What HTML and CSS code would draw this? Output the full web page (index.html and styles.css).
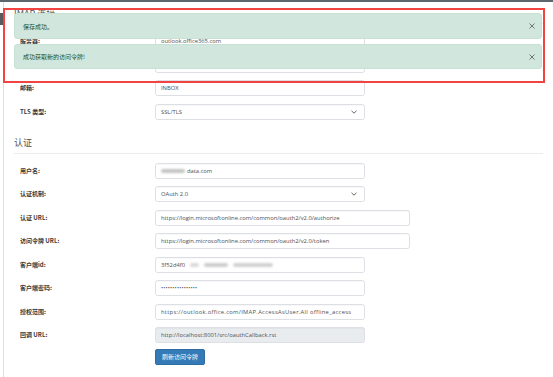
FILE: index.html
```html
<!DOCTYPE html>
<html lang="zh-CN">
<head>
<meta charset="utf-8">
<title>IMAP 设置</title>
<link rel="stylesheet" href="styles.css">
</head>
<body>
<div class="topbar"></div>
<div class="side-tab"></div>
<main class="page">
  <section class="section">
    <h2 class="section-title">IMAP 连接</h2>
    <div class="form">
      <label class="label">服务器:</label>
      <div class="input short">outlook.office365.com</div>
      <label class="label">端口:</label>
      <div class="input short">993</div>
      <label class="label">邮箱:</label>
      <div class="input short">INBOX</div>
      <label class="label">TLS 类型:</label>
      <div class="input short select">SSL/TLS<svg class="chev" viewBox="0 0 6 4" width="6" height="4"><polyline points="0.5,0.8 3,3.2 5.5,0.8" fill="none" stroke="#555" stroke-width="0.9"/></svg></div>
    </div>
  </section>

  <section class="section second">
    <h2 class="section-title">认证</h2>
    <div class="form">
      <label class="label">用户名:</label>
      <div class="input short"><span class="blur b1"></span>data.com</div>
      <label class="label">认证机制:</label>
      <div class="input short select">OAuth 2.0<svg class="chev" viewBox="0 0 6 4" width="6" height="4"><polyline points="0.5,0.8 3,3.2 5.5,0.8" fill="none" stroke="#555" stroke-width="0.9"/></svg></div>
      <label class="label">认证 URL:</label>
      <div class="input long">https://login.microsoftonline.com/common/oauth2/v2.0/authorize</div>
      <label class="label">访问令牌 URL:</label>
      <div class="input long">https://login.microsoftonline.com/common/oauth2/v2.0/token</div>
      <label class="label">客户端id:</label>
      <div class="input short">3f52d4f0<span class="blur b2"></span><span class="blur b3"></span><span class="blur b4"></span></div>
      <label class="label">客户端密码:</label>
      <div class="input short dots">••••••••••••••••</div>
      <label class="label">授权范围:</label>
      <div class="input short scope">https://outlook.office.com/IMAP.AccessAsUser.All offline_access</div>
      <label class="label">回调 URL:</label>
      <div class="input short readonly">http://localhost:8001/src/oauthCallback.rst</div>
      <span></span>
      <div class="actions"><button class="btn">刷新访问令牌</button></div>
    </div>
  </section>
</main>

<div class="toasts">
  <div class="toast t1"><span>保存成功。</span><svg class="close" viewBox="0 0 6 6" width="6" height="6"><path d="M0.5 0.5L5.5 5.5M5.5 0.5L0.5 5.5" stroke="#6b7a72" stroke-width="1"/></svg></div>
  <div class="toast t2"><span>成功获取新的访问令牌!</span><svg class="close" viewBox="0 0 6 6" width="6" height="6"><path d="M0.5 0.5L5.5 5.5M5.5 0.5L0.5 5.5" stroke="#6b7a72" stroke-width="1"/></svg></div>
</div>
<div class="annotation"></div>
</body>
</html>
```

FILE: styles.css
```css
* { box-sizing: border-box; }

html, body {
  margin: 0;
  padding: 0;
  background: #fff;
  width: 553px;
  height: 377px;
  overflow: hidden;
}

body {
  font-family: "Open Sans", "Noto Sans CJK SC", sans-serif;
  color: #333;
  position: relative;
}

.topbar {
  height: 2px;
  background: #5c666c;
}

.side-tab {
  position: absolute;
  left: 0;
  top: 13px;
  width: 3px;
  height: 12px;
  background: #5a5a5a;
}

.page {
  margin-left: 3px;
  border-left: 1px solid #dedede;
  padding: 5.5px 10px 20px 10px;
  min-height: 375px;
}

.section-title {
  margin: 0 0 9px 0;
  padding-bottom: 3.5px;
  border-bottom: 1px solid #ececec;
  font-size: 9px;
  line-height: 12px;
  font-weight: 400;
  color: #555;
  font-family: "Noto Sans CJK SC", "Open Sans", sans-serif;
}

.second {
  margin-top: 17px;
}

.second .section-title {
  padding-bottom: 4px;
}

.form {
  display: grid;
  grid-template-columns: 141px auto;
  row-gap: 7.5px;
  align-items: center;
}

.label {
  padding-left: 6px;
  font-size: 6px;
  line-height: 10px;
  font-weight: 700;
  color: #3a3a3a;
  font-family: "Noto Sans CJK SC", "Open Sans", sans-serif;
}

.input {
  height: 16px;
  border: 1px solid #dcdfe3;
  border-radius: 2.5px;
  box-shadow: inset 0 1px 1px rgba(0, 0, 0, 0.03);
  padding: 0 5px;
  font-size: 5.8px;
  line-height: 14px;
  color: #4a4f55;
  background: #fff;
  display: flex;
  align-items: center;
  white-space: nowrap;
  overflow: hidden;
}

.short { width: 210px; }
.long { width: 255px; }

.scope { letter-spacing: 0.3px; }

.select {
  justify-content: space-between;
  padding-right: 7px;
}

.chev { display: block; }

.readonly {
  background: #e9ecef;
}

.dots {
  font-size: 5.5px;
  letter-spacing: 0.2px;
  color: #555;
}

.blur {
  display: inline-block;
  height: 4px;
  border-radius: 2px;
  background: #c4c4c4;
  filter: blur(1px);
}

.b1 { width: 24px; margin-right: 2px; }
.b2 { width: 9px; margin-left: 5px; background: #dadada; }
.b3 { width: 24px; margin-left: 5px; background: #cdcdcd; }
.b4 { width: 40px; margin-left: 5px; background: #d2d2d2; }

.actions {
  display: flex;
  height: 16px;
  margin-top: -1.5px;
}

.btn {
  display: block;
  height: 16px;
  margin: 0;
  padding: 0 6px;
  border: 1px solid #2e6da4;
  border-radius: 2px;
  background: #337ab7;
  color: #fff;
  font-size: 6px;
  font-family: "Noto Sans CJK SC", "Open Sans", sans-serif;
  line-height: 14px;
}

.toasts {
  position: absolute;
  left: 14px;
  top: 13px;
  width: 528px;
  display: flex;
  flex-direction: column;
  gap: 5px;
}

.toast {
  display: flex;
  align-items: center;
  justify-content: space-between;
  padding: 0 6px 0 8px;
  background: #d1e7dd;
  border: 1px solid #c7e1d5;
  border-radius: 3px;
  color: #0f5132;
  font-size: 6px;
  font-family: "Noto Sans CJK SC", "Open Sans", sans-serif;
}

.t1 { height: 26px; }
.t2 { height: 25px; }

.close { display: block; }

.annotation {
  position: absolute;
  left: 3px;
  top: 8px;
  width: 542px;
  height: 75px;
  border: 2px solid #f24343;
}
```
